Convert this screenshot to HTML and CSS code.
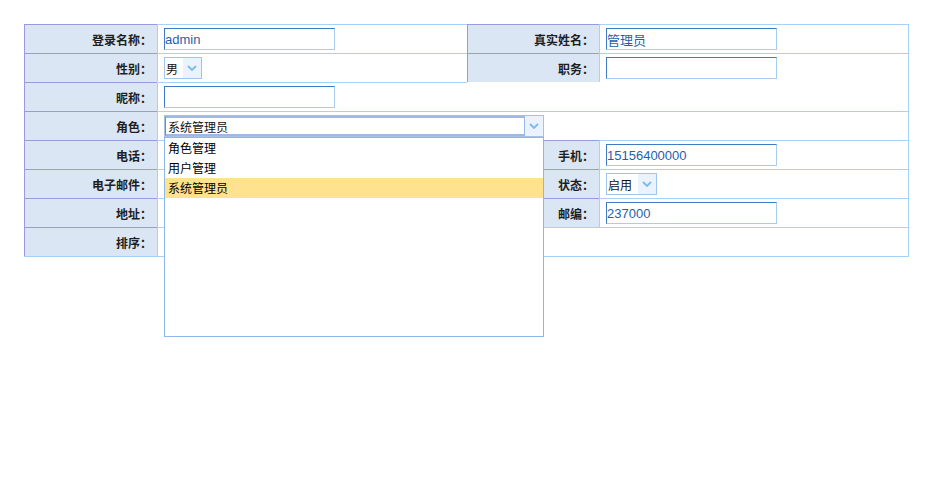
FILE: index.html
```html
<!DOCTYPE html>
<html lang="zh-CN">
<head>
<meta charset="utf-8">
<title>用户信息</title>
<link rel="stylesheet" href="styles.css">
</head>
<body>
<div class="page">
<div class="form">
  <div class="lbl">登录名称：</div>
  <div class="val"><input class="txt" type="text" value="admin"></div>
  <div class="lbl">真实姓名：</div>
  <div class="val"><input class="txt" type="text" value="管理员"></div>

  <div class="lbl">性别：</div>
  <div class="val">
    <div class="sel sel-sex"><span class="sel-text">男</span><span class="sel-btn"><svg width="10" height="6" viewBox="0 0 10 6"><path d="M1 1 L5 5 L9 1" fill="none" stroke="#7db9ee" stroke-width="1.8"/></svg></span></div>
  </div>
  <div class="lbl">职务：</div>
  <div class="val"><input class="txt" type="text" value=""></div>

  <div class="lbl">昵称：</div>
  <div class="val span3 part-top"><input class="txt" type="text" value=""></div>

  <div class="lbl">角色：</div>
  <div class="val span3 top-layer">
    <div class="combo">
      <span class="combo-text">系统管理员</span>
      <span class="combo-btn"><svg width="10" height="6" viewBox="0 0 10 6"><path d="M1 1 L5 5 L9 1" fill="none" stroke="#7db9ee" stroke-width="1.8"/></svg></span>
      <ul class="combo-list">
        <li>角色管理</li>
        <li>用户管理</li>
        <li class="on">系统管理员</li>
      </ul>
    </div>
  </div>

  <div class="lbl">电话：</div>
  <div class="val"><input class="txt" type="text" value=""></div>
  <div class="lbl">手机：</div>
  <div class="val"><input class="txt" type="text" value="15156400000"></div>

  <div class="lbl">电子邮件：</div>
  <div class="val"><input class="txt" type="text" value=""></div>
  <div class="lbl">状态：</div>
  <div class="val">
    <div class="sel sel-state"><span class="sel-text">启用</span><span class="sel-btn"><svg width="10" height="6" viewBox="0 0 10 6"><path d="M1 1 L5 5 L9 1" fill="none" stroke="#7db9ee" stroke-width="1.8"/></svg></span></div>
  </div>

  <div class="lbl">地址：</div>
  <div class="val"><input class="txt" type="text" value=""></div>
  <div class="lbl">邮编：</div>
  <div class="val"><input class="txt" type="text" value="237000"></div>

  <div class="lbl">排序：</div>
  <div class="val span3"></div>
</div>
</div>
</body>
</html>
```
FILE: styles.css
```css
* { box-sizing: border-box; }
html, body { margin: 0; padding: 0; background: #fff; }
body {
  font-family: "Noto Sans CJK SC", "Liberation Sans", sans-serif;
  font-size: 12px;
  color: #000;
}
.page {
  min-height: 477px;
  padding: 24px 0 0 24px;
}
.form {
  width: 885px;
  display: grid;
  grid-template-columns: 133px 310px 132px 309px;
  grid-auto-rows: 29px;
  border-right: 1px solid #a6d2f8;
  border-bottom: 1px solid #a6d2f8;
}
.lbl {
  background: #dbe6f4;
  border-top: 1px solid #9c9ade;
  border-left: 1px solid #9c9ade;
  display: flex;
  align-items: center;
  justify-content: flex-end;
  padding-right: 5px;
  font-weight: bold;
  color: #1e1e1e;
  font-size: 12px;
}
.val {
  border-top: 1px solid #a6d2f8;
  border-left: 1px solid #a6d2f8;
  display: flex;
  align-items: center;
  padding-left: 6px;
}
.span3 { grid-column: 2 / 5; }
.part-top {
  border-top-color: transparent;
  background: linear-gradient(#a6d2f8, #a6d2f8) 0 0 / 310px 1px no-repeat border-box;
}
.top-layer { position: relative; z-index: 5; }
.txt {
  width: 171px;
  height: 22px;
  margin: 0;
  padding: 0 1px 0 0;
  border: 1px solid #a9cdef;
  border-top-color: #3d7cc2;
  border-left-color: #3d7cc2;
  font-family: "Liberation Sans", "Noto Sans CJK SC", sans-serif;
  font-size: 13px;
  color: #1f5fae;
  background: #fff;
  outline: none;
}
.sel {
  height: 22px;
  display: flex;
  border: 1px solid #9fc6ee;
  background: #fff;
}
.sel-sex { width: 38px; }
.sel-state { width: 51px; }
.sel-text {
  flex: 1;
  display: flex;
  align-items: center;
  padding-left: 1px;
  font-size: 12px;
  color: #111;
}
.sel-btn {
  width: 18px;
  background: #eaf3fd;
  display: flex;
  align-items: center;
  justify-content: center;
}
.combo {
  position: relative;
  width: 380px;
  height: 22px;
  display: flex;
  border: 1px solid #a4c2ea;
  background: #fff;
}
.combo-text {
  flex: 1;
  display: flex;
  align-items: center;
  padding-left: 2px;
  border: 1px solid #9ab9e6;
  border-left-color: #5e8fd0;
  border-top-width: 2px;
  border-bottom-width: 2px;
  font-size: 12px;
  color: #111;
}
.combo-btn {
  width: 18px;
  background: #eaf3fd;
  display: flex;
  align-items: center;
  justify-content: center;
}
.combo-list {
  position: absolute;
  left: -1px;
  top: 21px;
  width: 380px;
  height: 200px;
  margin: 0;
  padding: 0;
  list-style: none;
  background: #fff;
  border: 1px solid #8db6ea;
}
.combo-list li {
  height: 20px;
  line-height: 20px;
  padding-left: 3px;
  font-size: 12px;
  color: #000;
}
.combo-list li.on { background: #ffe28e; }
```
